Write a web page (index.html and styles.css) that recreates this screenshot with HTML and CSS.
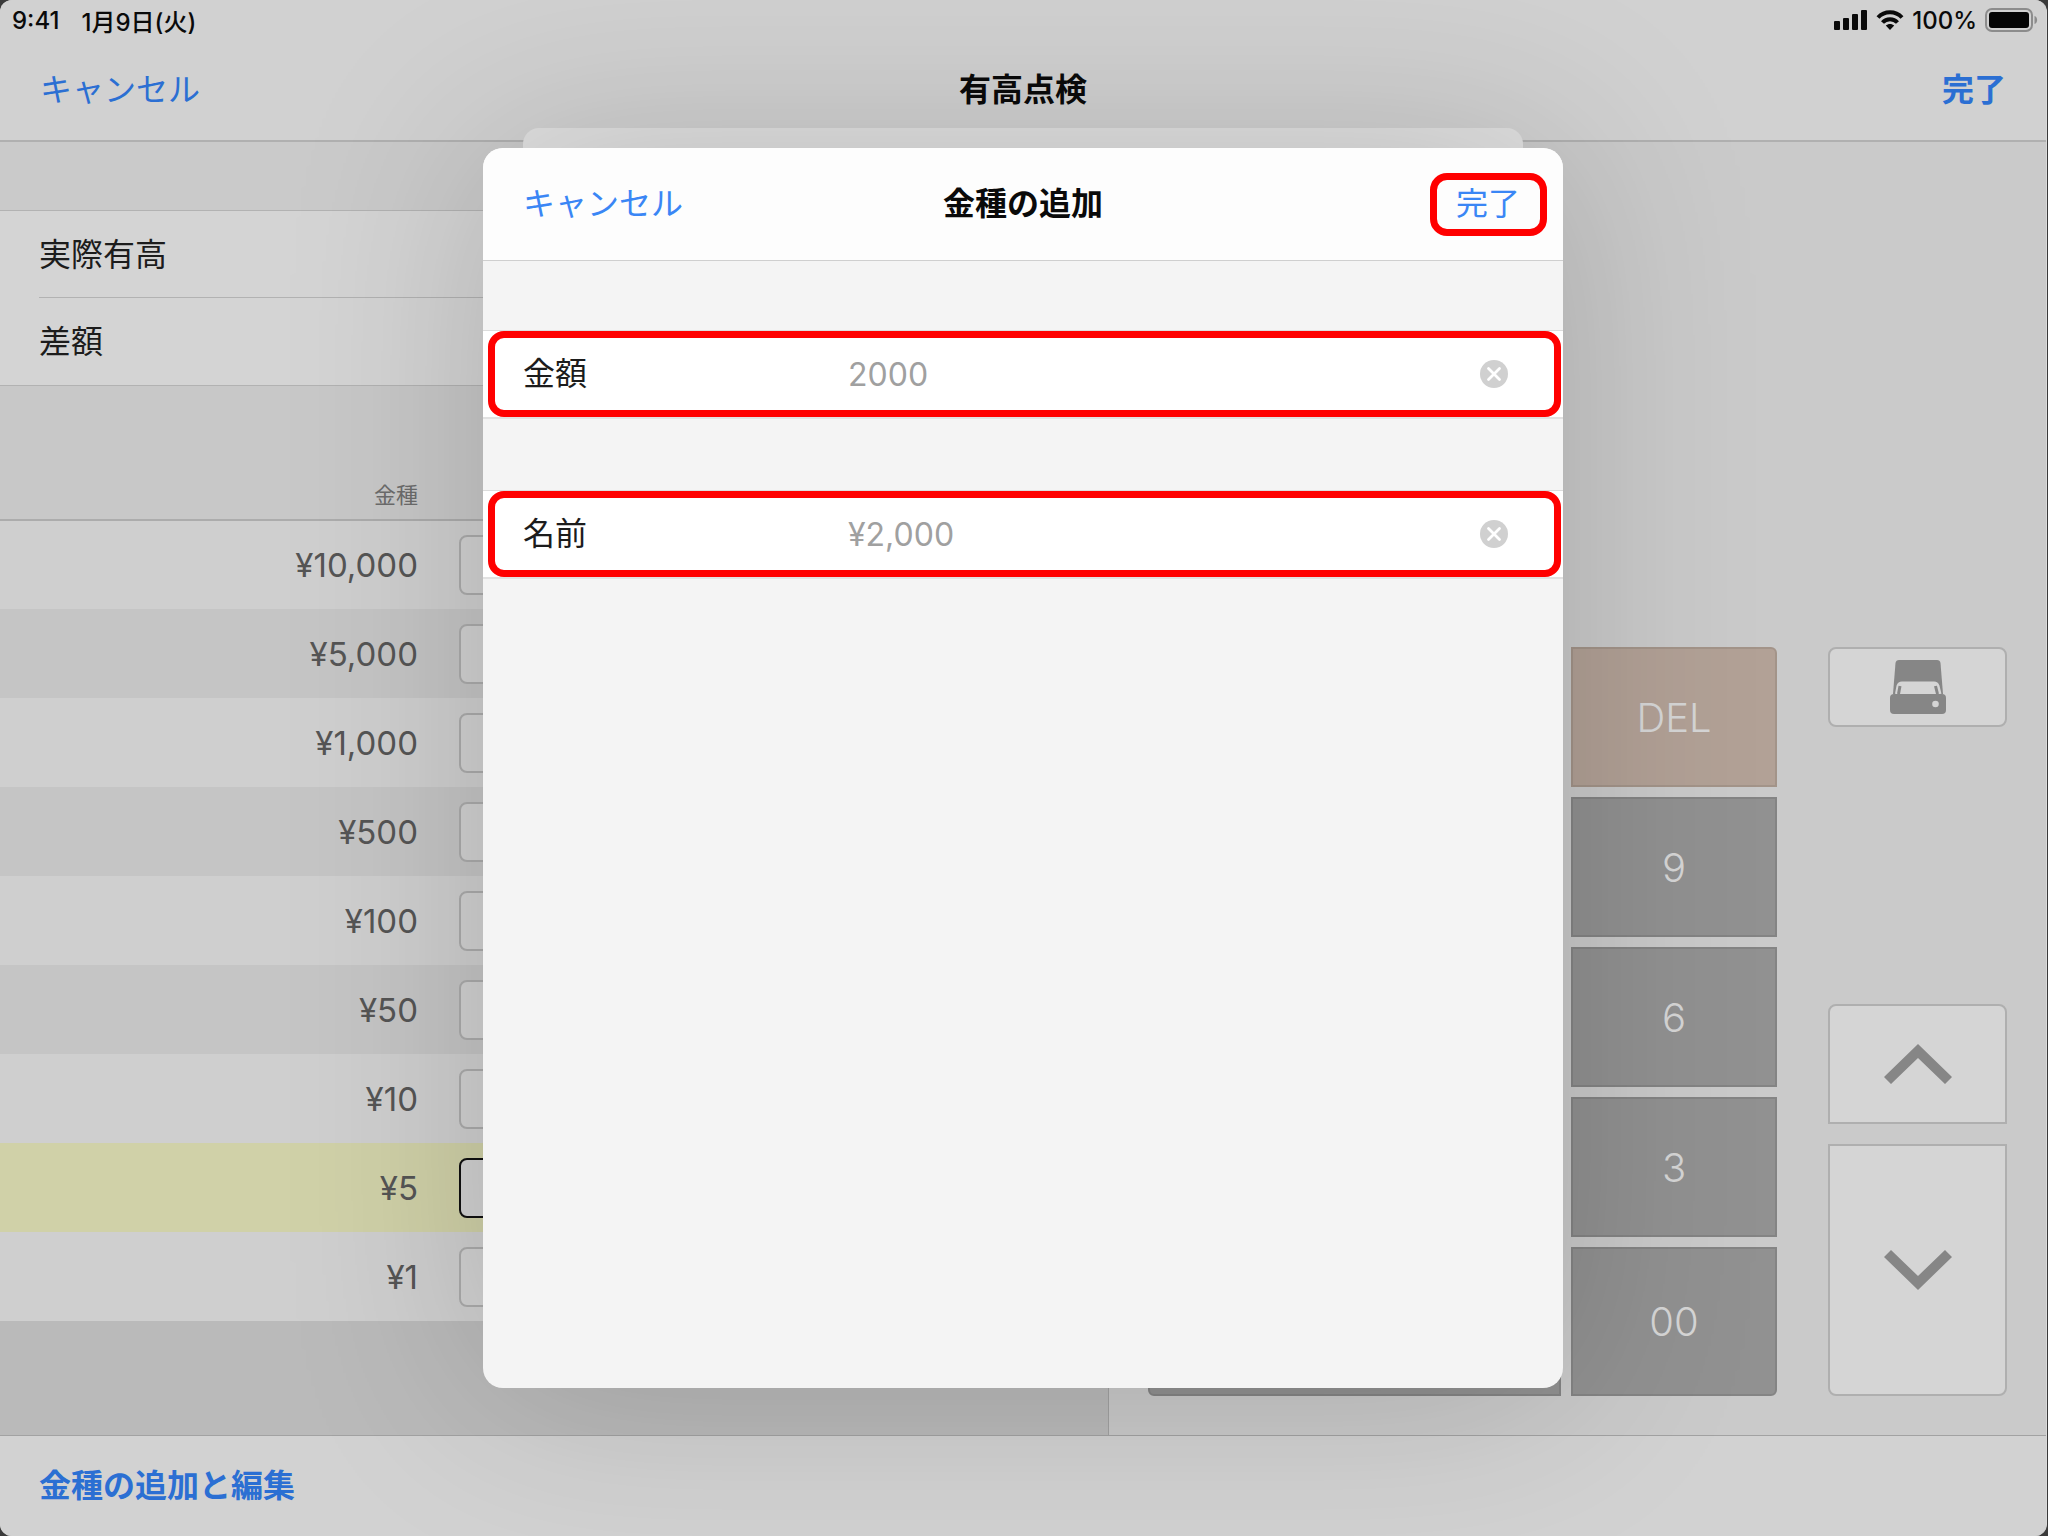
FILE: index.html
```html
<!DOCTYPE html>
<html lang="ja">
<head>
  <meta charset="UTF-8" />
  <meta name="viewport" content="width=device-width, initial-scale=1.0" />
  <title>有高点検</title>
  <link rel="stylesheet" href="styles.css">
</head>
<body>
  <div class="app">
    <header class="top">
      <div class="status">
        <span>9:41</span>
        <span class="date">1月9日(火)</span>
        <div class="status-right">
          <svg width="34" height="20" viewBox="0 0 34 20" fill="#0a0a0a" aria-hidden="true">
            <rect x="0" y="11" width="6" height="9" rx="1"/>
            <rect x="9" y="8" width="6" height="12" rx="1"/>
            <rect x="18" y="4" width="6" height="16" rx="1"/>
            <rect x="27" y="0" width="6" height="20" rx="1"/>
          </svg>
          <svg width="28" height="20" viewBox="0 0 28 20" fill="none" stroke="#0a0a0a" stroke-width="4" aria-hidden="true">
            <path d="M2 7.5C8.500 0.500 19.500 0.500 26 7.500"/>
            <path d="M6.500 12.500C10.500 8 17.500 8 21.500 12.500"/>
            <path d="M14 20L9.800 15.600C12 13.300 16 13.300 18.200 15.600Z" fill="#0a0a0a" stroke="none"/>
          </svg>
          <span>100%</span>
          <svg width="53" height="24" viewBox="0 0 53 24" aria-hidden="true">
            <rect x="1" y="1" width="46" height="22" rx="6" fill="none" stroke="#8c8c8c" stroke-width="2"/>
            <rect x="4" y="4" width="40" height="16" rx="3" fill="#050505"/>
            <path d="M49.500 8C53 9 53 15 49.500 16Z" fill="#8c8c8c"/>
          </svg>
        </div>
      </div>
      <nav class="bar">
        <button type="button" class="link">キャンセル</button>
        <h1>有高点検</h1>
        <button type="button" class="link strong">完了</button>
      </nav>
    </header>

    <main class="main">
      <section class="left">
        <ul class="summary">
          <li>実際有高</li>
          <li>差額</li>
        </ul>
        <table class="coins">
          <thead>
            <tr><th>金種</th><td></td></tr>
          </thead>
          <tbody>
            <tr><th><label for="y10000">¥10,000</label></th><td><input type="text" id="y10000" /></td></tr>
            <tr><th><label for="y5000">¥5,000</label></th><td><input type="text" id="y5000" /></td></tr>
            <tr><th><label for="y1000">¥1,000</label></th><td><input type="text" id="y1000" /></td></tr>
            <tr><th><label for="y500">¥500</label></th><td><input type="text" id="y500" /></td></tr>
            <tr><th><label for="y100">¥100</label></th><td><input type="text" id="y100" /></td></tr>
            <tr><th><label for="y50">¥50</label></th><td><input type="text" id="y50" /></td></tr>
            <tr><th><label for="y10">¥10</label></th><td><input type="text" id="y10" /></td></tr>
            <tr class="active"><th><label for="y5">¥5</label></th><td><input type="text" id="y5" /></td></tr>
            <tr><th><label for="y1">¥1</label></th><td><input type="text" id="y1" /></td></tr>
          </tbody>
        </table>
      </section>

      <section class="right">
        <div class="keypad">
          <button type="button" class="key del">DEL</button>
          <button type="button" class="key">9</button>
          <button type="button" class="key">6</button>
          <button type="button" class="key">3</button>
          <button type="button" class="key zero" aria-label="0"></button>
          <button type="button" class="key last">00</button>
        </div>
        <div class="side">
          <button type="button" class="side-btn print" aria-label="ドロア">
            <svg width="56" height="54" viewBox="0 0 56 54" aria-hidden="true">
              <path d="M9 0H47Q50 0 50.500 3L53 34H3L5.500 3Q6 0 9 0Z" fill="#868686"/>
              <path d="M6.500 34L8 26Q9 23 12 23H44Q47 23 48 26L50 34" fill="#d5d5d5" stroke="#d5d5d5" stroke-width="3"/>
              <path d="M8.500 34L10 26M47.500 34L45.500 26" stroke="#868686" stroke-width="3"/>
              <rect x="0" y="34" width="56" height="20" rx="4" fill="#868686"/>
              <circle cx="45.500" cy="44" r="3.300" fill="#d5d5d5"/>
            </svg>
          </button>
          <button type="button" class="side-btn up" aria-label="上へ">
            <svg width="68" height="40" viewBox="0 0 68 40" aria-hidden="true">
              <path d="M34 0L68 33L61 40L34 14L7 40L0 33Z" fill="#868686"/>
            </svg>
          </button>
          <button type="button" class="side-btn down" aria-label="下へ">
            <svg width="68" height="40" viewBox="0 0 68 40" aria-hidden="true">
              <path d="M34 40L68 7L61 0L34 26L7 0L0 7Z" fill="#868686"/>
            </svg>
          </button>
        </div>
      </section>
    </main>

    <footer class="bottom">
      <button type="button" class="link strong">金種の追加と編集</button>
    </footer>

    <div class="sheet-back"></div>
    <form class="sheet" role="dialog" aria-labelledby="sheetTitle">
      <div class="sheet-bar">
        <button type="button" class="link cancel">キャンセル</button>
        <h2 id="sheetTitle">金種の追加</h2>
        <button type="button" class="link marked">完了</button>
      </div>
      <div class="field">
        <div class="field-box">
          <label for="amount">金額</label>
          <input type="text" id="amount" value="2000" />
          <button type="button" class="clear" aria-label="金額を消去">
            <svg width="28" height="28" viewBox="0 0 28 28" aria-hidden="true">
              <circle cx="14" cy="14" r="14" fill="#d0d0d0"/>
              <path d="M8.500 8.500L19.500 19.500M19.500 8.500L8.500 19.500" stroke="#fff" stroke-width="2.800" stroke-linecap="round"/>
            </svg>
          </button>
        </div>
      </div>
      <div class="field">
        <div class="field-box">
          <label for="name">名前</label>
          <input type="text" id="name" value="¥2,000" />
          <button type="button" class="clear" aria-label="名前を消去">
            <svg width="28" height="28" viewBox="0 0 28 28" aria-hidden="true">
              <circle cx="14" cy="14" r="14" fill="#d0d0d0"/>
              <path d="M8.500 8.500L19.500 19.500M19.500 8.500L8.500 19.500" stroke="#fff" stroke-width="2.800" stroke-linecap="round"/>
            </svg>
          </button>
        </div>
      </div>
    </form>
  </div>
</body>
</html>
```
FILE: styles.css
```css
* {
  box-sizing: border-box;
}
body {
  margin: 0;
  padding-right: 1px;
  background: #3a3a3a;
  font-family: Inter, "Noto Sans CJK JP", sans-serif;
  font-size: 32px;
  color: #1c1c1c;
}
button,
input {
  font: inherit;
  margin: 0;
  padding: 0;
}
button {
  border: none;
  background: none;
  cursor: pointer;
}
svg {
  display: block;
}
h1,
h2 {
  margin: 0;
  font-size: 32px;
  font-weight: 600;
  line-height: 40px;
  color: #0a0a0a;
}
.app {
  position: relative;
  display: flex;
  flex-direction: column;
  min-height: 100vh;
  background: #cacaca;
  border-right: 1px solid #dadada;
  border-radius: 12px;
  overflow: hidden;
}

/* status bar and navigation */
.top {
  background: #d1d1d1;
  border-bottom: 2px solid #b0b0b0;
}
.status {
  display: flex;
  align-items: center;
  height: 40px;
  padding: 0 8px 0 12px;
  font-size: 24px;
  font-weight: 450;
  color: #0a0a0a;
}
.date {
  margin-left: 22px;
}
.status-right {
  display: flex;
  align-items: center;
  gap: 8px;
  margin-left: auto;
}
.bar,
.sheet-bar {
  display: grid;
  grid-template-columns: 1fr auto 1fr;
  align-items: center;
  padding: 0 40px;
}
.bar {
  height: 100px;
}
.link {
  justify-self: start;
  line-height: 40px;
  color: #2b6fd3;
}
.link:last-child {
  justify-self: end;
}
.strong {
  font-weight: 600;
}

.main {
  flex: 1;
  display: flex;
}

/* denomination list */
.left {
  width: 1109px;
  background: #bababa;
  border-right: 1px solid #a2a2a2;
}
.summary {
  list-style: none;
  margin: 0;
  padding: 68px 0 0 39px;
  background: linear-gradient(#cacaca 68px, #d4d4d4 68px);
  border-bottom: 1px solid #b2b2b2;
}
.summary li {
  height: 88px;
  line-height: 87px;
  border-top: 1px solid #b2b2b2;
}
.summary li:first-child {
  height: 87px;
  margin-left: -39px;
  padding-left: 39px;
}
.coins {
  width: 100%;
  border-collapse: collapse;
}
.coins th,
.coins td {
  padding: 0;
  height: 89px;
}
.coins th {
  width: 418px;
  font-size: 33px;
  font-weight: 400;
  text-align: right;
  color: #555;
}
.coins td {
  padding-left: 41px;
}
.coins thead {
  background: #c8c8c8;
}
.coins thead th {
  height: 134px;
  padding-top: 80px;
  font-size: 22px;
  color: #6c6c6c;
  border-bottom: 2px solid #acacac;
}
.coins thead td {
  border-bottom: 2px solid #acacac;
}
.coins tbody tr {
  background: #cfcfcf;
}
.coins tbody tr:nth-child(even) {
  background: #c5c5c5;
}
.coins tbody tr.active {
  background: #d0d1a8;
}
.coins input {
  display: block;
  width: 240px;
  height: 60px;
  background: #d2d2d2;
  border: 2px solid #acacac;
  border-radius: 8px;
}
.coins .active input {
  border-color: #111;
}

/* keypad */
.right {
  flex: 1;
  display: flex;
  align-items: flex-end;
  justify-content: space-between;
  padding: 0 39px;
  padding-bottom: 39px;
}
.keypad {
  width: 629px;
  display: grid;
  grid-template-columns: 1fr 1fr 206px;
  grid-template-rows: repeat(4, 140px) 149px;
  gap: 10px;
}
.key {
  grid-column: 3;
  background: #919191;
  border: 2px solid #848484;
  color: #d6d6d6;
  font-size: 40px;
  font-weight: 300;
}
.del {
  background: #b2a196;
  border-color: #a39489;
  border-top-right-radius: 6px;
}
.zero {
  grid-column: 1 / 3;
  border-bottom-left-radius: 6px;
}
.last {
  border-bottom-right-radius: 6px;
}
.side {
  width: 179px;
  display: flex;
  flex-direction: column;
}
.side-btn {
  display: flex;
  align-items: center;
  justify-content: center;
  background: #d5d5d5;
  border: 2px solid #afafaf;
}
.print {
  height: 80px;
  margin-bottom: 277px;
  border-radius: 8px;
}
.up {
  height: 120px;
  margin-bottom: 20px;
  border-radius: 8px 8px 0 0;
}
.down {
  height: 252px;
  border-radius: 0 0 8px 8px;
}

.bottom {
  display: flex;
  align-items: center;
  height: 101px;
  padding: 0 39px;
  background: #d2d2d2;
  border-top: 1px solid #a2a2a2;
}

/* modal sheets over the page */
.sheet-back,
.sheet {
  position: absolute;
  left: 50%;
  transform: translateX(-50%);
}
.sheet-back {
  top: 128px;
  width: 1000px;
  height: 60px;
  background: #e1e1e1;
  border-radius: 16px 16px 0 0;
}
.sheet {
  top: 148px;
  bottom: 148px;
  width: 1080px;
  background: #f4f4f4;
  border-radius: 20px;
  box-shadow: 0 0 200px rgba(0, 0, 0, 0.18);
  overflow: hidden;
}
.sheet-bar {
  height: 113px;
  padding: 0 16px;
  background: #fdfdfd;
  border-bottom: 1px solid #cfcfcf;
}
.sheet .link {
  color: #3a86f5;
}
.cancel {
  padding-left: 24px;
}
.marked {
  width: 117px;
  height: 63px;
  padding-right: 20px;
  text-align: right;
  border: 7px solid #f00;
  border-radius: 17px;
}
.field {
  margin-top: 69px;
  padding: 0 2px 0 5px;
  background: #fff;
  border-top: 1px solid #dcdcdc;
  border-bottom: 2px solid #e2e2e2;
}
.field + .field {
  margin-top: 71px;
}
.field-box {
  display: flex;
  align-items: center;
  height: 86px;
  padding: 0 46px 0 28px;
  border: 7px solid #f00;
  border-radius: 16px;
}
.field-box label {
  width: 325px;
  line-height: 40px;
}
.field-box input {
  flex: 1;
  border: none;
  outline: none;
  background: none;
  color: #a0a0a0;
}
```
